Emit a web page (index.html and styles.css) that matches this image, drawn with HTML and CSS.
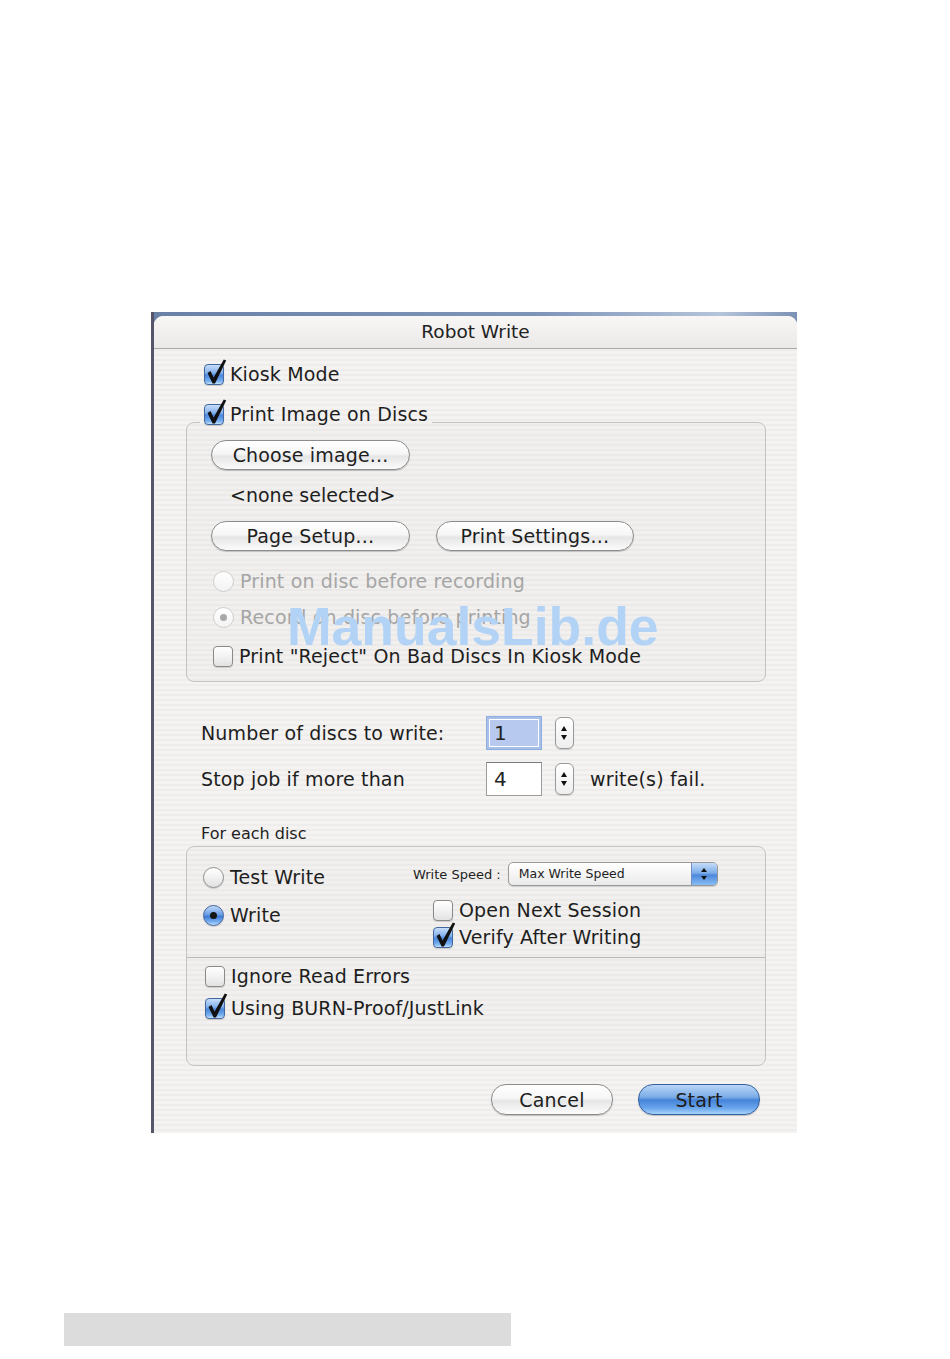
FILE: index.html
```html
<!DOCTYPE html>
<html lang="en">
<head>
    <meta charset="UTF-8">
    <meta name="viewport" content="width=device-width, initial-scale=1.0">
    <title>Robot Write</title>
    <link rel="stylesheet" href="styles.css">
</head>
<body>
    <div class="page">
        <div class="dialog">
            <div class="window">
                <div class="titlebar">Robot Write</div>
                <div class="content">
                    <div class="row kiosk">
                        <span class="box checked"><svg class="tick" viewBox="0 0 24 28" width="24" height="28"><path d="M2.5 16 L5.5 14 L8.6 20.5 L18.8 2.5 L21.2 3.6 L10 26.5 L7.6 26.5 Z"/></svg></span>
                        <span>Kiosk Mode</span>
                    </div>

                    <fieldset class="group print-group">
                        <legend>
                            <div class="row">
                                <span class="box checked"><svg class="tick" viewBox="0 0 24 28" width="24" height="28"><path d="M2.5 16 L5.5 14 L8.6 20.5 L18.8 2.5 L21.2 3.6 L10 26.5 L7.6 26.5 Z"/></svg></span>
                                <span>Print Image on Discs</span>
                            </div>
                        </legend>
                        <div class="group-inner">
                            <button class="pill choose">Choose image...</button>
                            <div class="note">&lt;none selected&gt;</div>
                            <div class="btn-row">
                                <button class="pill">Page Setup…</button>
                                <button class="pill">Print Settings…</button>
                            </div>
                            <div class="row disabled opt-first">
                                <span class="radio dim"></span>
                                <span>Print on disc before recording</span>
                            </div>
                            <div class="row disabled opt-second">
                                <span class="radio dim on"></span>
                                <span>Record on disc before printing</span>
                            </div>
                            <div class="row opt-reject">
                                <span class="box"></span>
                                <span>Print "Reject" On Bad Discs In Kiosk Mode</span>
                            </div>
                        </div>
                    </fieldset>

                    <div class="numbers">
                        <div class="num-row">
                            <span class="num-label">Number of discs to write:</span>
                            <span class="field focused">1</span>
                            <span class="stepper"></span>
                        </div>
                        <div class="num-row second">
                            <span class="num-label">Stop job if more than</span>
                            <span class="field">4</span>
                            <span class="stepper"></span>
                            <span class="after">write(s) fail.</span>
                        </div>
                    </div>

                    <div class="section-label">For each disc</div>
                    <div class="group disc-group">
                        <div class="top-section">
                            <div class="mode-col">
                                <div class="row">
                                    <span class="radio"></span>
                                    <span>Test Write</span>
                                </div>
                                <div class="row mode-write">
                                    <span class="radio on blue"></span>
                                    <span>Write</span>
                                </div>
                            </div>
                            <div class="speed-col">
                                <div class="speed-row">
                                    <span class="speed-label">Write Speed :</span>
                                    <div class="popup">
                                        <span class="popup-text">Max Write Speed</span>
                                        <span class="popup-arrows"></span>
                                    </div>
                                </div>
                                <div class="row session">
                                    <span class="box"></span>
                                    <span>Open Next Session</span>
                                </div>
                                <div class="row verify">
                                    <span class="box checked"><svg class="tick" viewBox="0 0 24 28" width="24" height="28"><path d="M2.5 16 L5.5 14 L8.6 20.5 L18.8 2.5 L21.2 3.6 L10 26.5 L7.6 26.5 Z"/></svg></span>
                                    <span>Verify After Writing</span>
                                </div>
                            </div>
                        </div>
                        <div class="bottom-section">
                            <div class="row">
                                <span class="box"></span>
                                <span>Ignore Read Errors</span>
                            </div>
                            <div class="row burn">
                                <span class="box checked"><svg class="tick" viewBox="0 0 24 28" width="24" height="28"><path d="M2.5 16 L5.5 14 L8.6 20.5 L18.8 2.5 L21.2 3.6 L10 26.5 L7.6 26.5 Z"/></svg></span>
                                <span>Using BURN-Proof/JustLink</span>
                            </div>
                        </div>
                    </div>

                    <div class="actions">
                        <button class="pill action">Cancel</button>
                        <button class="pill action default">Start</button>
                    </div>
                </div>
                <div class="watermark">ManualsLib.de</div>
            </div>
        </div>
    </div>
    <div class="footer-bar"></div>
</body>
</html>
```

FILE: styles.css
```css
body, html {
    margin: 0;
    padding: 0;
    background-color: #ffffff;
    font-family: "DejaVu Sans", sans-serif;
    color: #1e1e1e;
}

.page {
    padding: 312px 0 0 151px;
}

/* window frame */
.dialog {
    width: 646px;
    height: 821px;
    box-sizing: border-box;
    padding-top: 4px;
    border-left: 3px solid #55566a;
    background: linear-gradient(to right, #6a80a6, #7f95b8 60%, #b6c4da 88%, #7b91b5);
}

.window {
    position: relative;
    height: 100%;
    border-radius: 9px 9px 0 0;
    background: repeating-linear-gradient(to bottom, #f4f3f1 0, #f4f3f1 3px, #eeedeb 3px, #eeedeb 5px);
}

.titlebar {
    height: 32px;
    line-height: 32px;
    border-bottom: 1px solid #aaaaaa;
    border-radius: 9px 9px 0 0;
    background: linear-gradient(#f8f7f6, #ebe9e7);
    text-align: center;
    font-size: 18.5px;
    color: #222;
}

.content {
    padding-top: 14px;
}

/* generic label rows */
.row {
    display: flex;
    align-items: center;
    gap: 6px;
    height: 22px;
    font-size: 19px;
    letter-spacing: 0.15px;
    white-space: nowrap;
}

.kiosk {
    margin-left: 50px;
}

.disabled {
    color: #a5a5a5;
}

/* checkboxes */
.box {
    position: relative;
    flex: none;
    width: 20px;
    height: 21px;
    box-sizing: border-box;
    border: 1px solid #8a8a8a;
    border-radius: 4px;
    background: linear-gradient(#ffffff, #f2f2f2 50%, #e2e2e2);
    box-shadow: 0 1px 1px rgba(0, 0, 0, 0.15);
}

.box.checked {
    border-color: #42679f;
    background: linear-gradient(#c8defa 0%, #86b2ec 40%, #4b87dc 55%, #78b0ef 85%, #c3e2ff 100%);
}

.tick {
    position: absolute;
    left: 0;
    top: -8px;
    fill: #111;
}

/* radio buttons */
.radio {
    position: relative;
    flex: none;
    width: 21px;
    height: 21px;
    box-sizing: border-box;
    border: 1px solid #8f8f8f;
    border-radius: 50%;
    background: linear-gradient(#ffffff, #f1f1f1 50%, #e0e0e0);
    box-shadow: 0 1px 1px rgba(0, 0, 0, 0.15);
}

.radio.blue {
    border-color: #3f649c;
    background: linear-gradient(#c2dafa 0%, #6b9fe4 45%, #3f7bd6 55%, #7db4f2 85%, #c0e0ff 100%);
}

.radio.dim {
    border-color: #cdcdcd;
    background: linear-gradient(#ffffff, #f3f3f3);
    box-shadow: none;
}

.radio.on::after {
    content: "";
    position: absolute;
    left: 6px;
    top: 6px;
    width: 7px;
    height: 7px;
    border-radius: 50%;
    background: #151515;
}

.radio.dim.on::after {
    background: #a9a9a9;
}

/* group boxes */
.group {
    margin: 18px 0 0 32px;
    width: 580px;
    min-width: 0;
    box-sizing: border-box;
    border: 1px solid #c3c3c3;
    border-radius: 8px;
    background-color: rgba(0, 0, 0, 0.012);
}

.print-group {
    padding: 0 0 14px 0;
}

.print-group legend {
    margin-left: 13px;
    padding: 0 4px 17px;
}

.group-inner {
    padding-left: 24px;
}

/* push buttons */
.pill {
    display: block;
    width: 199px;
    height: 30px;
    padding: 0;
    border: 1px solid #8c8c8c;
    border-radius: 15px;
    background: linear-gradient(#ffffff 0%, #f6f6f6 45%, #e6e6e6 55%, #fbfbfb 100%);
    box-shadow: 0 1px 1px rgba(0, 0, 0, 0.2);
    font-family: "DejaVu Sans", sans-serif;
    font-size: 19px;
    letter-spacing: 0.15px;
    color: #1e1e1e;
}

.choose {
    margin-top: -2px;
}

.note {
    margin: 14px 0 0 19px;
    height: 22px;
    line-height: 22px;
    font-size: 19px;
}

.btn-row {
    display: flex;
    gap: 26px;
    margin-top: 15px;
}

.btn-row .pill:last-child {
    width: 198px;
}

.opt-first {
    margin: 19px 0 0 2px;
}

.opt-second {
    margin: 14px 0 0 2px;
}

.opt-reject {
    margin: 17px 0 0 2px;
}

/* number fields */
.numbers {
    margin: 34px 0 0 47px;
}

.num-row {
    display: flex;
    align-items: center;
    height: 34px;
    font-size: 19px;
    letter-spacing: 0.15px;
}

.num-row.second {
    margin-top: 12px;
}

.num-label {
    width: 285px;
    white-space: nowrap;
}

.field {
    width: 56px;
    height: 34px;
    box-sizing: border-box;
    padding-left: 7px;
    line-height: 32px;
    border: 1px solid #9c9c9c;
    border-top-color: #7a7a7a;
    background: #ffffff;
    font-size: 20px;
    color: #222;
}

.field.focused {
    border-color: #8eaee0;
    background: #b7c9ef;
    box-shadow: inset 0 0 0 2px #a7c0ea, inset 0 0 0 3px #ffffff;
}

.stepper {
    position: relative;
    width: 19px;
    height: 32px;
    margin-left: 13px;
    box-sizing: border-box;
    border: 1px solid #999;
    border-radius: 6px;
    background: linear-gradient(#ffffff, #eeeeee);
    box-shadow: 0 1px 1px rgba(0, 0, 0, 0.15);
}

.stepper::before,
.stepper::after {
    content: "";
    position: absolute;
    left: 5px;
    border-left: 3.5px solid transparent;
    border-right: 3.5px solid transparent;
}

.stepper::before {
    top: 8px;
    border-bottom: 5px solid #111;
}

.stepper::after {
    bottom: 8px;
    border-top: 5px solid #111;
}

.after {
    margin-left: 16px;
    white-space: nowrap;
}

.section-label {
    margin: 28px 0 0 47px;
    height: 20px;
    line-height: 20px;
    font-size: 16px;
}

/* disc group */
.disc-group {
    margin-top: 2px;
    height: 220px;
}

.top-section {
    display: flex;
    padding: 15px 0 9px 16px;
    border-bottom: 1px solid #b7b7b7;
}

.mode-col {
    width: 210px;
    margin-top: 4px;
}

.mode-write {
    margin-top: 16px;
}

.speed-row {
    display: flex;
    align-items: center;
    gap: 7px;
    height: 24px;
}

.speed-label {
    font-size: 13px;
    white-space: nowrap;
}

.popup {
    display: flex;
    width: 210px;
    height: 24px;
    box-sizing: border-box;
    border: 1px solid #999;
    border-radius: 5px;
    overflow: hidden;
    background: linear-gradient(#ffffff, #f5f5f5 50%, #e9e9e9);
    box-shadow: 0 1px 1px rgba(0, 0, 0, 0.15);
}

.popup-text {
    flex: 1;
    padding-left: 10px;
    line-height: 22px;
    font-size: 12.5px;
}

.popup-arrows {
    position: relative;
    width: 25px;
    border-left: 1px solid #6f8fc0;
    background: linear-gradient(#c6ddf9 0%, #7eaeea 45%, #4d88dc 55%, #88bdf3 100%);
}

.popup-arrows::before,
.popup-arrows::after {
    content: "";
    position: absolute;
    left: 9px;
    border-left: 3px solid transparent;
    border-right: 3px solid transparent;
}

.popup-arrows::before {
    top: 5px;
    border-bottom: 4px solid #111;
}

.popup-arrows::after {
    bottom: 5px;
    border-top: 4px solid #111;
}

.session {
    margin: 13px 0 0 20px;
}

.verify {
    margin: 5px 0 0 20px;
}

.bottom-section {
    padding: 7px 0 0 18px;
}

.burn {
    margin-top: 10px;
}

/* dialog buttons */
.actions {
    display: flex;
    justify-content: flex-end;
    gap: 25px;
    margin: 18px 37px 0 0;
}

.action {
    width: 122px;
    height: 31px;
}

.action.default {
    border-color: #34609f;
    background: linear-gradient(#b9d6f7 0%, #7aabe6 42%, #4583da 52%, #6aa6ec 80%, #a8d4fb 100%);
}

.watermark {
    position: absolute;
    left: 133px;
    top: 284px;
    font-family: "Liberation Sans", Arial, sans-serif;
    font-weight: bold;
    font-size: 53.5px;
    line-height: 53px;
    color: #b2d3f6;
    white-space: nowrap;
}

.footer-bar {
    margin: 180px 0 0 64px;
    width: 447px;
    height: 33px;
    background-color: #dcdcdc;
}
```
